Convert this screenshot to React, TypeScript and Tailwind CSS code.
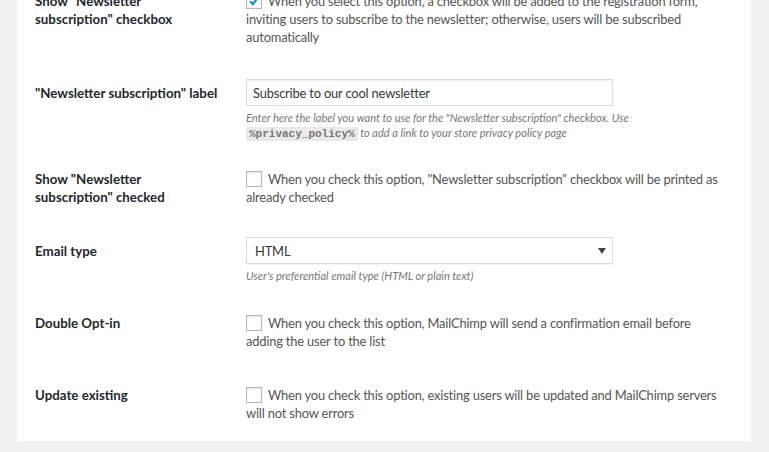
import React from "react";

const font = { fontFamily: 'Lato, "Open Sans", Arial, sans-serif' };

function Check({ checked }: { checked?: boolean }) {
  return (
    <span className="inline-block align-[-3px] w-4 h-4 border border-[#b4b9be] bg-white shadow-[inset_0_1px_2px_rgba(0,0,0,0.1)] mr-[6px] relative">
      {checked && (
        <svg viewBox="0 0 16 16" className="absolute -left-[1px] -top-[1px] w-4 h-4">
          <path d="M4 8.2 L6.8 11 L12 4.5" stroke="#1e8cbe" strokeWidth="2.2" fill="none" />
        </svg>
      )}
    </span>
  );
}

function Row({
  label,
  children,
  className,
}: {
  label: React.ReactNode;
  children: React.ReactNode;
  className?: string;
}) {
  return (
    <div className={"flex " + (className || "")}>
      <div className="w-[211px] shrink-0 text-[13.3px] leading-[18px] font-bold text-[#23282d]">{label}</div>
      <div className="flex-1 text-[12.9px] tracking-[-0.18px] leading-[18px] text-[#555]">{children}</div>
    </div>
  );
}

export default function App() {
  return (
    <div className="w-[769px] h-[452px] bg-[#f1f1f1] overflow-hidden" style={font}>
      <div className="ml-[17px] w-[734px] bg-white pl-[18px] pr-[22px] pb-[19px] -mt-[8px] pt-0">
        <Row label={<>Show "Newsletter<br />subscription" checkbox</>}>
          <div>
            <Check checked />
            When you select this option, a checkbox will be added to the registration form, inviting users to subscribe to the newsletter; otherwise, users will be subscribed automatically
          </div>
        </Row>

        <Row label={<div className="pt-[5px]">"Newsletter subscription" label</div>} className="mt-[33px]">
          <div className="w-[367px] h-[27px] border border-[#ddd] shadow-[inset_0_1px_2px_rgba(0,0,0,0.07)] px-[6px] flex items-center text-[#32373c]">
            Subscribe to our cool newsletter
          </div>
          <div className="mt-[4px] text-[11.1px] tracking-normal leading-[15px] italic text-[#777] pr-[70px]">
            Enter here the label you want to use for the "Newsletter subscription" checkbox. Use{" "}
            <code className="not-italic bg-[#eaeaea] px-[3px] py-[1px] text-[11px] text-[#777] font-bold" style={{ fontFamily: '"Liberation Mono", monospace' }}>
              %privacy_policy%
            </code>{" "}
            to add a link to your store privacy policy page
          </div>
        </Row>

        <Row label={<>Show "Newsletter<br />subscription" checked</>} className="mt-[28px]">
          <div>
            <Check />
            When you check this option, "Newsletter subscription" checkbox will be printed as already checked
          </div>
        </Row>

        <Row label={<div className="pt-[5px]">Email type</div>} className="mt-[31px]">
          <div className="w-[367px] h-[27px] border border-[#ddd] shadow-[0_1px_1px_rgba(0,0,0,0.04)] pl-[8px] pr-[6px] flex items-center justify-between text-[#32373c]">
            <span>HTML</span>
            <svg width="8" height="6" viewBox="0 0 8 6"><path d="M0 0 L8 0 L4 6 Z" fill="#444" /></svg>
          </div>
          <div className="mt-[4px] text-[11.1px] tracking-normal leading-[15px] italic text-[#777]">
            User's preferential email type (HTML or plain text)
          </div>
        </Row>

        <Row label="Double Opt-in" className="mt-[31px]">
          <div>
            <Check />
            When you check this option, MailChimp will send a confirmation email before adding the user to the list
          </div>
        </Row>

        <Row label="Update existing" className="mt-[36px]">
          <div>
            <Check />
            When you check this option, existing users will be updated and MailChimp servers will not show errors
          </div>
        </Row>
      </div>
    </div>
  );
}
